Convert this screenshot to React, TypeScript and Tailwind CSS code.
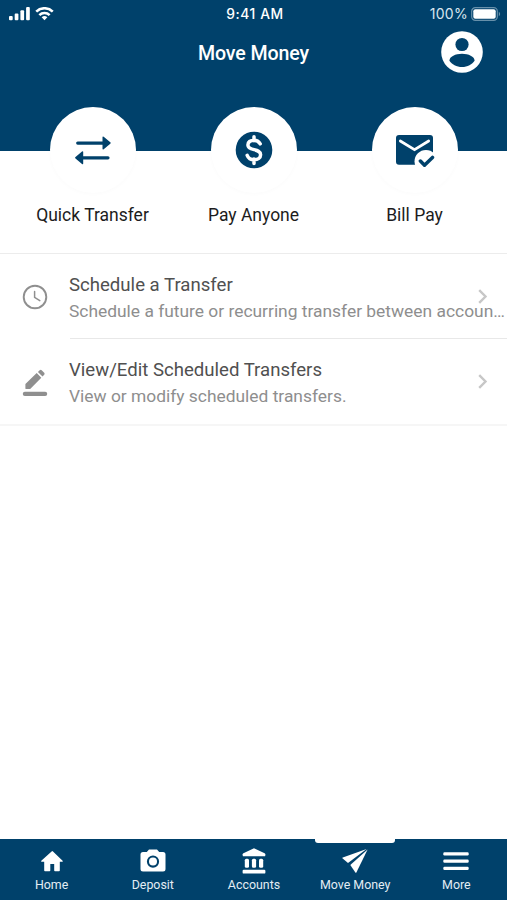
import type { ReactNode } from "react"

const actions = [
	{ name: "Quick Transfer", icon: <TransferIcon /> },
	{ name: "Pay Anyone", icon: <DollarIcon /> },
	{ name: "Bill Pay", icon: <BillIcon /> },
]

const tabs = [
	{ name: "Home", icon: <HomeIcon />, isActive: false },
	{ name: "Deposit", icon: <CameraIcon />, isActive: false },
	{ name: "Accounts", icon: <BankIcon />, isActive: false },
	{ name: "Move Money", icon: <PlaneIcon />, isActive: true },
	{ name: "More", icon: <MenuIcon />, isActive: false },
]

export default function App() {
	return (
		<div className="flex h-[900px] w-[507px] flex-col overflow-hidden bg-white font-['Roboto',sans-serif]">
			<header className="h-[151px] shrink-0 bg-[#00416b] text-white">
				<StatusBar />
				<div className="grid grid-cols-[1fr_auto_1fr] items-center pt-[3px]">
					<h1 className="col-start-2 pt-1 text-[19.6px] leading-6 font-medium tracking-[-0.1px]">
						Move Money
					</h1>
					<button className="mr-6 justify-self-end" aria-label="Profile">
						<ProfileIcon />
					</button>
				</div>
			</header>

			<main className="flex-1">
				{/* Shortcut circles straddle the header edge */}
				<div className="relative -mt-11 grid h-[147px] grid-cols-3 border-b border-[#ececec] pr-3 pl-3">
					{actions.map((action) => (
						<button key={action.name} className="flex flex-col items-center">
							<span className="flex size-[86px] items-center justify-center rounded-full bg-white shadow-[0_1px_4px_rgba(0,0,0,0.02)]">
								{action.icon}
							</span>
							<span className="mt-[10px] text-[17.5px] leading-6 whitespace-nowrap text-[#1c1c1c]">
								{action.name}
							</span>
						</button>
					))}
				</div>

				<div className="border-b-2 border-[#f6f6f6]">
					<ListRow
						icon={<ClockIcon />}
						title="Schedule a Transfer"
						text="Schedule a future or recurring transfer between accoun…"
						divider
					/>
					<ListRow
						icon={<EditIcon />}
						title="View/Edit Scheduled Transfers"
						text="View or modify scheduled transfers."
					/>
				</div>
			</main>

			<nav className="grid h-[61px] shrink-0 grid-cols-5 bg-[#00416b] pl-px text-white">
				{tabs.map((tab) => (
					<button key={tab.name} className="flex flex-col items-center">
						<span
							className={`h-1 w-20 rounded-b-[3px] ${
								tab.isActive ? "bg-white" : "bg-transparent"
							}`}
						></span>
						<span className="mt-1 flex h-7 items-center justify-center">
							{tab.icon}
						</span>
						<span className="mt-0.5 text-[12.4px] leading-4 whitespace-nowrap text-[#e3edf4]">
							{tab.name}
						</span>
					</button>
				))}
			</nav>
		</div>
	)
}

function StatusBar() {
	return (
		<div className="grid h-7 grid-cols-3 items-center pr-1.5 pl-[9px] font-['Inter',sans-serif]">
			<div className="flex items-center gap-[5px]">
				<svg width="21" height="14" viewBox="0 0 21 14" fill="currentColor">
					<rect x="0" y="9" width="3.7" height="4.3" rx="1" />
					<rect x="5.7" y="6.5" width="3.7" height="6.8" rx="1" />
					<rect x="11.4" y="3.3" width="3.7" height="10" rx="1" />
					<rect x="17.1" y="0" width="3.7" height="13.3" rx="1" />
				</svg>
				<svg
					width="19"
					height="14"
					viewBox="0 0 20 14"
					fill="none"
					stroke="currentColor"
					strokeWidth="2.7"
				>
					<path d="M1.3 4.5a12.4 12.4 0 0 1 17.4 0" />
					<path d="M4.6 8.2a7.7 7.7 0 0 1 10.8 0" />
					<path
						d="M10 13.5 7 10.5a4.3 4.3 0 0 1 6 0Z"
						fill="currentColor"
						stroke="none"
					/>
				</svg>
			</div>
			<span className="text-center text-[13.8px] leading-4 font-medium tracking-[0.6px]">
				9:41 AM
			</span>
			<div className="flex items-center justify-end gap-[3px]">
				<span className="text-[14px] leading-4 tracking-[0.3px] text-[#d9e6ee]">
					100%
				</span>
				<svg width="30" height="14" viewBox="0 0 30 14">
					<rect
						x="0.7"
						y="0.7"
						width="25.6"
						height="12.6"
						rx="3.6"
						fill="none"
						stroke="#6790aa"
						strokeWidth="1.2"
					/>
					<rect x="2.3" y="2.3" width="22.4" height="9.4" rx="2" fill="#fff" />
					<path d="M27.8 4.8c1.8.7 1.8 3.7 0 4.4Z" fill="#6790aa" />
				</svg>
			</div>
		</div>
	)
}

function ListRow({
	icon,
	title,
	text,
	divider,
}: {
	icon: ReactNode
	title: string
	text: string
	divider?: boolean
}) {
	return (
		<div className="flex h-[85px] items-stretch">
			<span className="flex w-[70px] shrink-0 items-center justify-center">
				{icon}
			</span>
			<div
				className={`relative flex flex-1 flex-col justify-center pt-[3px] ${
					divider ? "border-b border-[#e8e8e8]" : ""
				}`}
			>
				<span className="-ml-px text-[18.6px] leading-[26px] whitespace-nowrap text-[#505050]">
					{title}
				</span>
				<span className="-ml-px text-[17.4px] leading-[26px] whitespace-nowrap text-[#8e8e8e]">
					{text}
				</span>
				<svg
					className="absolute top-[35px] right-[19px]"
					width="10"
					height="15"
					viewBox="0 0 10 15"
					fill="none"
					stroke="#c7c7c7"
					strokeWidth="2.4"
				>
					<path d="m1.2 1.2 6.3 6.3-6.3 6.3" />
				</svg>
			</div>
		</div>
	)
}

function ProfileIcon() {
	return (
		<svg width="42" height="42" viewBox="0 0 42 42">
			<circle cx="21" cy="21" r="20.8" fill="#fff" />
			<circle cx="21" cy="13.5" r="6.6" fill="#00416b" />
			<path
				d="M8.4 29.7c0-4.1 6.2-6.9 12.6-6.9s12.6 2.8 12.6 6.9C31.2 33.4 26.5 36 21 36S10.8 33.4 8.4 29.7Z"
				fill="#00416b"
			/>
		</svg>
	)
}

function TransferIcon() {
	return (
		<svg width="36" height="29" viewBox="0 0 36 29" fill="#00416b">
			<path d="M2.7 5.400h24.800V1.200q0-1.200 1.200-.5l6.600 5.600q.8.700 0 1.400l-6.600 5.600q-1.200.7-1.200-.5V8.700H2.700q-1.600 0-1.600-1.650T2.700 5.400Z" />
			<path d="M33 20.200H8.200V16q0-1.200-1.200-.5L.5 21.100q-.8.700 0 1.400L7 28.100q1.200.7 1.200-.5v-4.100H33q1.600 0 1.600-1.650T33 20.200Z" />
		</svg>
	)
}

function DollarIcon() {
	return (
		<svg width="38" height="38" viewBox="0 0 38 38">
			<circle cx="19" cy="19" r="18.3" fill="#00416b" />
			<path
				d="M25.2 12.800C23.800 10.400 21.800 9.200 19 9.200c-3.700 0-6.100 1.900-6.100 4.700 0 6.500 12.700 3 12.700 9.800 0 3.100-2.700 5-6.400 5-3.500 0-5.900-1.500-7-4.400M19 5.800v4M19 28v4.600"
				fill="none"
				stroke="#fff"
				strokeWidth="3.5"
				strokeLinecap="round"
			/>
		</svg>
	)
}

function BillIcon() {
	return (
		<svg width="40" height="34" viewBox="0 0 40 34">
			<rect x="1" y="2" width="37" height="29.8" rx="3" fill="#00416b" />
			<path
				d="m5.3 8 14.200 8.700L33.700 8"
				fill="none"
				stroke="#fff"
				strokeWidth="2.7"
				strokeLinecap="round"
			/>
			<circle cx="31" cy="28.5" r="11.5" fill="#fff" />
			<path
				d="m25.4 28 4.100 4.200 8-7.800"
				fill="none"
				stroke="#00416b"
				strokeWidth="3.5"
				strokeLinecap="round"
			/>
		</svg>
	)
}

function ClockIcon() {
	return (
		<svg
			width="26"
			height="26"
			viewBox="0 0 26 26"
			fill="none"
			stroke="#8f8f8f"
			strokeLinecap="round"
		>
			<circle cx="13" cy="13" r="11.3" strokeWidth="1.9" />
			<path d="M12.6 7.400v6l5.200 3.200" strokeWidth="1.5" />
		</svg>
	)
}

function EditIcon() {
	return (
		<svg width="26" height="28" viewBox="0 0 26 28" fill="#8f8f8f">
			<path d="M3.4 20.500v-4.600L14.700 5.100l4.600 4.600L8.200 20.900H3.800q-.4 0-.4-.4Z" />
			<path d="m15.9 4 1.800-1.700q1-.9 2 0l2.500 2.500q.9 1 0 2l-1.700 1.700Z" />
			<rect x="0.8" y="23.7" width="24.4" height="4.2" rx="2" />
		</svg>
	)
}

function HomeIcon() {
	return (
		<svg width="24" height="24" viewBox="0 0 24 24" fill="currentColor">
			<path d="M10.3 21.500v-6.600h3.900v6.600q0 .8.800.8h4q.8 0 .8-.8v-8.800h2.500q1-.1.300-.9L13 2.400q-.7-.6-1.400 0L1.300 11.800q-.6.800.3.900h2.600v8.800q0 .8.800.8h4.500q.8 0 .8-.8Z" />
		</svg>
	)
}

function CameraIcon() {
	return (
		<svg width="26" height="24" viewBox="0 0 26 24" fill="currentColor">
			<path
				fillRule="evenodd"
				d="M9 .5h8L19.200 3H23q2.500 0 2.500 2.500V20q0 2.500-2.500 2.500H3Q.5 22.500.5 20V5.500Q.5 3 3 3h3.800Zm4 6a6.100 6.100 0 1 0 0 12.200 6.100 6.100 0 0 0 0-12.200Z"
			/>
			<circle cx="13" cy="12.6" r="4" />
		</svg>
	)
}

function BankIcon() {
	return (
		<svg width="24" height="26" viewBox="0 0 24 26" fill="currentColor">
			<path d="m12 .3 10.600 5q.7.400.7 1v1.100q0 .9-.9.900H1.600q-.9 0-.9-.9V6.300q0-.6.700-1Z" />
			<rect x="2.8" y="10.7" width="4.2" height="9" rx="1.5" />
			<rect x="9.9" y="10.7" width="4.2" height="9" rx="1.5" />
			<rect x="17" y="10.7" width="4.2" height="9" rx="1.5" />
			<rect x="0.6" y="21.8" width="22.8" height="3.8" rx="1.2" />
		</svg>
	)
}

function PlaneIcon() {
	return (
		<svg width="26" height="26" viewBox="0 0 26 26" fill="currentColor">
			<path d="M24.6 1.100.8 9.400q-1 .5-.1 1.200l5.300 4.300Z" />
			<path d="M25.6 1.600 14.500 24.200q-.6 1-1.300 0L8.300 17Z" />
		</svg>
	)
}

function MenuIcon() {
	return (
		<svg width="26" height="20" viewBox="0 0 26 20" fill="currentColor">
			<rect x="0.3" y="1.3" width="25.4" height="3.2" rx="1.2" />
			<rect x="0.3" y="8.5" width="25.4" height="3.2" rx="1.2" />
			<rect x="0.3" y="15.7" width="25.4" height="3.2" rx="1.2" />
		</svg>
	)
}
